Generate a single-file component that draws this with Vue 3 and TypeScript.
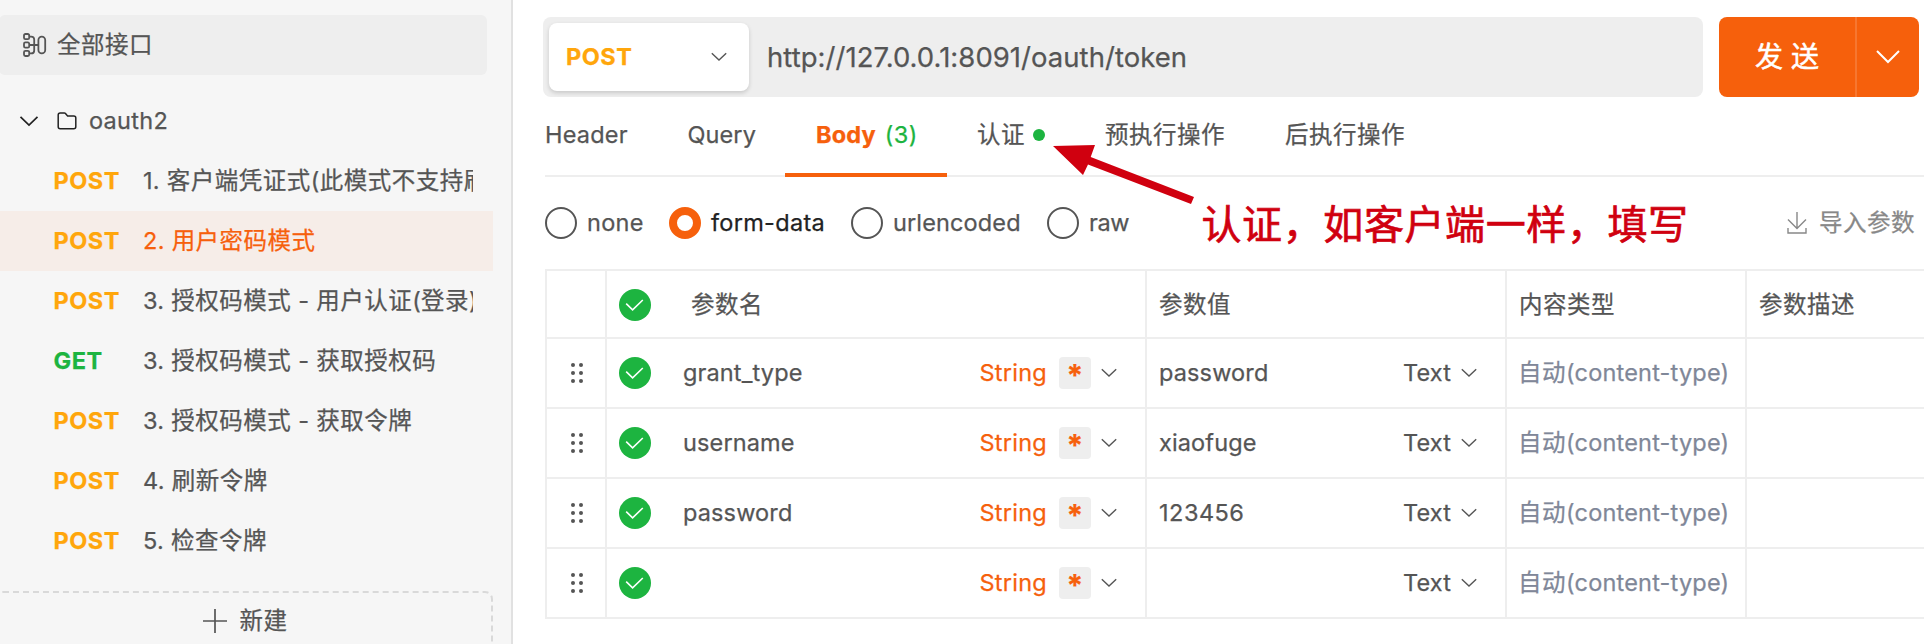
<script setup lang="ts">
interface Endpoint {
  method: 'POST' | 'GET'
  name: string
  active?: boolean
}

interface Param {
  name: string
  value: string
}

const endpoints: Endpoint[] = [
  { method: 'POST', name: '1. 客户端凭证式(此模式不支持刷新令牌)' },
  { method: 'POST', name: '2. 用户密码模式', active: true },
  { method: 'POST', name: '3. 授权码模式 - 用户认证(登录)' },
  { method: 'GET', name: '3. 授权码模式 - 获取授权码' },
  { method: 'POST', name: '3. 授权码模式 - 获取令牌' },
  { method: 'POST', name: '4. 刷新令牌' },
  { method: 'POST', name: '5. 检查令牌' },
]

const bodyTypes = [
  { key: 'none', checked: false },
  { key: 'form-data', checked: true },
  { key: 'urlencoded', checked: false },
  { key: 'raw', checked: false },
]

const params: Param[] = [
  { name: 'grant_type', value: 'password' },
  { name: 'username', value: 'xiaofuge' },
  { name: 'password', value: '123456' },
  { name: '', value: '' },
]

// Splits a label into Chinese and Latin runs, which are tracked differently.
function runs(text: string): { text: string; cjk: boolean }[] {
  return (text.match(/[\u4e00-\u9fff]+|[^\u4e00-\u9fff]+/g) ?? []).map((part) => ({
    text: part,
    cjk: /[\u4e00-\u9fff]/.test(part),
  }))
}
</script>

<template>
  <div class="app">
    <aside class="sidebar">
      <div class="all">
        <svg class="tree-icon" width="24" height="26" viewBox="0 0 24 26">
          <g fill="none" stroke="#555" stroke-width="1.8">
            <rect x="1" y="2" width="5.2" height="5.2" rx="1.4" />
            <rect x="1" y="10.4" width="5.2" height="5.2" rx="1.4" />
            <rect x="1" y="18.8" width="5.2" height="5.2" rx="1.4" />
            <path d="M6.2 4.6H8.2Q11.2 4.6 11.2 7.6V18.4Q11.2 21.4 8.2 21.4H6.2M6.2 13H15.4" />
            <rect x="15.4" y="4.6" width="6.8" height="16.8" rx="3.4" />
          </g>
        </svg>
        <span class="cjk">全部接口</span>
      </div>

      <div class="folder">
        <svg class="folder-arrow" width="20" height="12" viewBox="0 0 20 12">
          <path d="M1.5 1.8L10 10L18.5 1.8" fill="none" stroke="#222" stroke-width="1.7" />
        </svg>
        <svg class="folder-icon" width="20" height="18" viewBox="0 0 20 18">
          <path
            d="M3.2 1H7.4Q8 1 8.5 1.5L10.6 4H16.8Q18.8 4 18.8 6V14.8Q18.8 16.8 16.8 16.8H3.2Q1.2 16.8 1.2 14.8V3Q1.2 1 3.2 1Z"
            fill="none" stroke="#222" stroke-width="1.5"
          />
        </svg>
        <span class="folder-name">oauth2</span>
      </div>

      <div v-for="(e, i) in endpoints" :key="i" class="endpoint" :class="{ active: e.active }">
        <span class="method" :class="e.method.toLowerCase()">{{ e.method }}</span>
        <span class="endpoint-name"><span v-for="(r, j) in runs(e.name)" :key="j" :class="{ cjk: r.cjk }">{{ r.text }}</span></span>
      </div>

      <div class="new">
        <svg width="24" height="24" viewBox="0 0 24 24">
          <path d="M12 0V24M0 12H24" stroke="#555" stroke-width="1.7" />
        </svg>
        <span class="cjk">新建</span>
      </div>
    </aside>

    <main class="main">
      <div class="request">
        <div class="urlbar">
          <div class="method-select">
            <span class="method post">POST</span>
            <svg class="chev" width="16" height="10" viewBox="0 0 16 10">
              <path d="M.8 1.2L8 8L15.2 1.2" />
            </svg>
          </div>
          <span class="url">http://127.0.0.1:8091/oauth/token</span>
        </div>
        <div class="send">
          <span class="send-label">发 送</span>
          <span class="send-more">
            <svg width="24" height="14" viewBox="0 0 24 14">
              <path d="M1 1L12 12L23 1" fill="none" stroke="#fff" stroke-width="2" />
            </svg>
          </span>
        </div>
      </div>

      <nav class="tabs">
        <div class="tab t-header"><span>Header</span></div>
        <div class="tab t-query"><span>Query</span></div>
        <div class="tab t-body"><b>Body</b><span class="count">(3)</span></div>
        <div class="tab t-auth"><span class="cjk">认证</span><i class="dot"></i></div>
        <div class="tab t-pre"><span class="cjk">预执行操作</span></div>
        <div class="tab"><span class="cjk">后执行操作</span></div>
      </nav>

      <div class="types">
        <label v-for="t in bodyTypes" :key="t.key" class="type" :class="[t.key, { checked: t.checked }]">
          <i class="radio"></i><span>{{ t.key }}</span>
        </label>
        <div class="import">
          <svg width="20" height="24" viewBox="0 0 20 24">
            <path d="M10 1V17M1 8.4L10 17.4L19 8.4M1 17V22H19V17" fill="none" stroke="#888" stroke-width="1.4" />
          </svg>
          <span class="cjk">导入参数</span>
        </div>
      </div>

      <div class="table">
        <div class="row head">
          <div class="cell"></div>
          <div class="cell name">
            <svg class="check" width="32" height="32" viewBox="0 0 32 32">
              <circle cx="16" cy="16" r="16" fill="#1db440" />
              <path d="M7.2 14.6L13.6 20.8L23.8 11" fill="none" stroke="#fff" stroke-width="1.6" />
            </svg>
            <span class="label cjk">参数名</span>
          </div>
          <div class="cell"><span class="cjk">参数值</span></div>
          <div class="cell"><span class="cjk">内容类型</span></div>
          <div class="cell"><span class="cjk">参数描述</span></div>
        </div>
        <div v-for="(p, i) in params" :key="i" class="row">
          <div class="cell grip">
            <svg width="12" height="20" viewBox="0 0 12 20" fill="#555">
              <circle cx="2" cy="2" r="2" /><circle cx="10" cy="2" r="2" />
              <circle cx="2" cy="10" r="2" /><circle cx="10" cy="10" r="2" />
              <circle cx="2" cy="18" r="2" /><circle cx="10" cy="18" r="2" />
            </svg>
          </div>
          <div class="cell name">
            <svg class="check" width="32" height="32" viewBox="0 0 32 32">
              <circle cx="16" cy="16" r="16" fill="#1db440" />
              <path d="M7.2 14.6L13.6 20.8L23.8 11" fill="none" stroke="#fff" stroke-width="1.6" />
            </svg>
            <span class="label">{{ p.name }}</span>
            <span class="string">String</span>
            <span class="required">*</span>
            <svg class="chev" width="16" height="10" viewBox="0 0 16 10">
              <path d="M.8 1.2L8 8L15.2 1.2" />
            </svg>
          </div>
          <div class="cell value">
            <span class="label" :class="{ digits: /^\d+$/.test(p.value) }">{{ p.value }}</span>
            <span class="text">Text</span>
            <svg class="chev" width="16" height="10" viewBox="0 0 16 10">
              <path d="M.8 1.2L8 8L15.2 1.2" />
            </svg>
          </div>
          <div class="cell auto"><span class="cjk">自动</span><span>(content-type)</span></div>
          <div class="cell"></div>
        </div>
      </div>
    </main>

    <div class="note">
      <svg class="note-arrow" width="144" height="62" viewBox="0 0 144 62">
        <path d="M1 3L43 2L38.7 14L142 54L139 61L36 21.5L31 32Z" fill="#d0000f" />
      </svg>
      <span class="note-text" lang="zh-CN">认证，如客户端一样，填写</span>
    </div>
  </div>
</template>

<style>
body {
  overflow: hidden;
}
</style>

<style scoped>
.app {
  position: relative;
  display: flex;
  width: 1924px;
  height: 644px;
  overflow: hidden;
  background: #fff;
  color: #555;
  font-family: Inter, "Noto Sans CJK SC", sans-serif;
  font-size: 23.5px;
  letter-spacing: 0.13px;
  line-height: 34px;
  white-space: pre;
  -webkit-text-stroke: 0.25px currentColor;
}
.app * {
  box-sizing: border-box;
}
.cjk {
  letter-spacing: 0.5px;
}
svg {
  display: block;
  flex: none;
}
.chev path {
  fill: none;
  stroke: #555;
  stroke-width: 1.4;
}
.sidebar {
  flex: none;
  width: 513px;
  height: 644px;
  padding-top: 15px;
  background: #f6f6f6;
  border-right: 2px solid #e1e1e1;
  overflow: hidden;
}
.all {
  display: flex;
  align-items: center;
  gap: 10px;
  width: 488px;
  height: 60px;
  margin-left: -1px;
  padding-left: 24px;
  border-radius: 6px;
  background: #eee;
}
.folder {
  display: flex;
  align-items: center;
  height: 60px;
  margin-top: 16px;
  padding-left: 19px;
}
.folder-icon {
  margin-left: 18px;
}
.folder-name {
  margin-left: 12px;
  letter-spacing: 0.3px;
}
.endpoint {
  display: flex;
  align-items: center;
  width: 493px;
  height: 60px;
  padding: 0 20px 0 53.5px;
}
.endpoint.active {
  background: #f6ede8;
  color: #f6600c;
}
.method {
  font-weight: 700;
  letter-spacing: 0.5px;
}
.endpoint .method {
  flex: none;
  width: 89.5px;
}
.post {
  color: #ffa60c;
}
.get {
  color: #1db440;
}
.endpoint-name {
  flex: 1;
  overflow: hidden;
  letter-spacing: 0.3px;
}
.new {
  display: flex;
  align-items: center;
  justify-content: center;
  gap: 13px;
  width: 498px;
  height: 62px;
  margin: 20px 0 0 -5px;
  padding: 0 0 2px 2px;
  border: 2px dashed #d9d9d9;
  border-radius: 8px;
}
.main {
  flex: none;
  width: 1411px;
  padding: 17px 0 0 30px;
}
.request {
  display: flex;
  gap: 16px;
}
.urlbar {
  display: flex;
  align-items: center;
  width: 1160px;
  height: 80px;
  padding-left: 6px;
  border-radius: 8px;
  background: #eee;
}
.method-select {
  display: flex;
  align-items: center;
  justify-content: space-between;
  width: 200px;
  height: 68px;
  padding: 0 22px 0 17px;
  border-radius: 8px;
  background: #fff;
  box-shadow: 0 2px 4px rgba(0, 0, 0, 0.16);
}
.url {
  margin-left: 18px;
  font-size: 27.5px;
  letter-spacing: 0.04px;
}
.send {
  display: flex;
  width: 200px;
  height: 80px;
  border-radius: 8px;
  background: #f6600c;
  color: #fff;
}
.send-label {
  width: 136px;
  line-height: 80px;
  text-align: center;
  font-size: 28px;
  letter-spacing: 0;
  -webkit-text-stroke-width: 0.5px;
}
.send-more {
  display: flex;
  flex: 1;
  align-items: center;
  justify-content: center;
  border-left: 2px solid #f77730;
}
.tabs {
  display: flex;
  height: 80px;
  margin-left: 2px;
  border-bottom: 2px solid #eee;
}
.tab {
  display: flex;
  align-items: center;
  height: 80px;
  padding: 0 0 4px 30px;
}
.tab span {
  flex: none;
}
.t-header {
  width: 112px;
  padding-left: 0;
  letter-spacing: 0.2px;
}
.t-query {
  width: 128px;
  padding-left: 30.5px;
  letter-spacing: 0.1px;
}
.t-body {
  width: 162px;
  padding-bottom: 0;
  padding-left: 31px;
  border-bottom: 4px solid #f6600c;
  color: #f6600c;
}
.count {
  margin-left: 9px;
  color: #1db440;
  letter-spacing: 0.5px;
}
.t-auth {
  width: 128px;
}
.t-pre {
  width: 180px;
}
.dot {
  width: 12px;
  height: 12px;
  flex: none;
  margin-left: 8px;
  border-radius: 50%;
  background: #1db440;
}
.types {
  display: flex;
  align-items: center;
  height: 92px;
  margin-left: 2px;
}
.type {
  display: flex;
  align-items: center;
  gap: 10px;
}
.none {
  width: 124px;
  letter-spacing: 0.3px;
}
.form-data {
  width: 182px;
  letter-spacing: 0.3px;
}
.urlencoded {
  width: 196px;
}
.raw {
  letter-spacing: -0.4px;
}
.radio {
  width: 32px;
  height: 32px;
  flex: none;
  border: 2px solid #555;
  border-radius: 50%;
}
.checked {
  color: #222;
}
.checked .radio {
  border: 8px solid #f6600c;
}
.import {
  display: flex;
  align-items: center;
  gap: 12px;
  margin-left: auto;
  padding-right: 9px;
  color: #888;
}
.table {
  width: 1420px;
  margin-left: 2px;
  border-top: 2px solid #eee;
  border-left: 2px solid #eee;
}
.row {
  display: grid;
  grid-template-columns: 60px 540px 360px 240px 218px;
  height: 70px;
  border-bottom: 2px solid #eee;
}
.cell {
  display: flex;
  align-items: center;
  padding: 0 12px;
  border-right: 2px solid #eee;
}
.row.head {
  height: 68px;
}
.head .cell {
  padding-top: 2px;
}
.grip {
  padding-left: 24px;
}
.label {
  flex: 1;
}
.digits {
  letter-spacing: 0.5px;
}
.name .label {
  margin-left: 32px;
}
.head .name .label {
  margin-left: 40px;
}
.name {
  padding-right: 28px;
}
.string {
  color: #f6600c;
  letter-spacing: 0.25px;
}
.required {
  width: 32px;
  height: 32px;
  margin: 0 10px 0 12px;
  border-radius: 4px;
  background: #eee;
  color: #f6600c;
  font-size: 30px;
  font-weight: 700;
  line-height: 37px;
  text-align: center;
}
.value {
  padding-right: 28px;
}
.text {
  margin-right: 10px;
}
.auto {
  padding-left: 11px;
  color: #7f8798;
  letter-spacing: 0.2px;
}
.note {
  position: absolute;
  left: 1052px;
  top: 143px;
  color: #d0000f;
}
.note-arrow {
  position: absolute;
  left: 0;
  top: 0;
}
.note-text {
  position: absolute;
  left: 149.5px;
  top: 49px;
  font-family: "Noto Sans CJK SC", sans-serif;
  font-size: 40px;
  letter-spacing: 0.6px;
  line-height: 60px;
  -webkit-text-stroke-width: 0.7px;
}
</style>
